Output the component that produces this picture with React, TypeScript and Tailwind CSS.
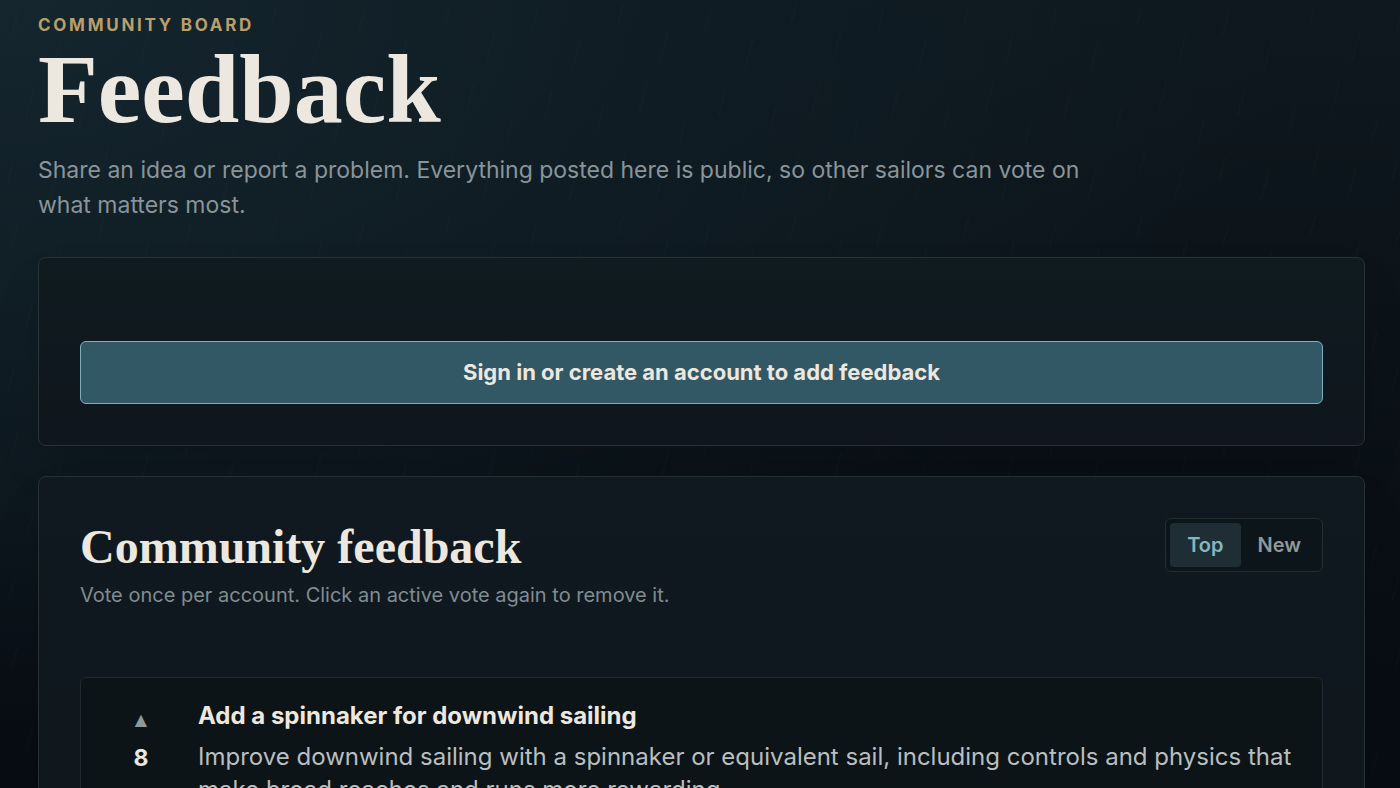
import React, { useState } from 'react';

type SortMode = 'top' | 'new';

interface FeedbackItem {
  id: number;
  title: string;
  body: string;
  votes: number;
}

const items: FeedbackItem[] = [
  {
    id: 1,
    title: 'Add a spinnaker for downwind sailing',
    body: 'Improve downwind sailing with a spinnaker or equivalent sail, including controls and physics that make broad reaches and runs more rewarding.',
    votes: 8,
  },
];

const sortOptions: { value: SortMode; label: string }[] = [
  { value: 'top', label: 'Top' },
  { value: 'new', label: 'New' },
];

// Faint slanted rain behind the whole page
const Rain: React.FC = () => (
  <svg className="pointer-events-none absolute inset-0 h-full w-full" aria-hidden="true">
    <defs>
      <pattern id="rain" width="173" height="211" patternUnits="userSpaceOnUse">
        <g stroke="#8fb9ad" strokeWidth="1" strokeLinecap="round" opacity="0.025">
          <path d="M18 12l-6 22M61 40l-8 29M104 6l-5 18M149 31l-8 30M33 92l-7 25M84 108l-6 22M128 84l-8 29M166 122l-5 19M14 158l-6 22M58 171l-8 29M108 150l-6 22M145 168l-8 30" />
        </g>
      </pattern>
    </defs>
    <rect width="100%" height="100%" fill="url(#rain)" />
  </svg>
);

const FeedbackCard: React.FC<{ item: FeedbackItem }> = ({ item }) => (
  <article className="flex gap-[17px] rounded-md border border-[#20292d] bg-[#0c1418] p-5">
    <div className="flex w-20 shrink-0 flex-col items-center">
      <button
        type="button"
        aria-label={`Upvote ${item.title}`}
        className="h-11 w-11 font-['DejaVu_Sans'] text-base text-[#8f999b]"
      >
        ▲
      </button>
      <span className="text-[23px] leading-[33px] font-bold text-[#ece8df]">{item.votes}</span>
    </div>
    <div className="min-w-0 flex-1">
      <h3 className="text-2xl leading-9 font-bold text-[#ece8df]">{item.title}</h3>
      <p className="mt-1.5 text-2xl leading-[33px] text-[#b9bfc0]">{item.body}</p>
    </div>
  </article>
);

const App: React.FC = () => {
  const [sort, setSort] = useState<SortMode>('top');

  return (
    <div className="relative h-screen overflow-hidden bg-[#080d14] bg-[radial-gradient(ellipse_at_0%_0%,#15262e_0%,#101d25_30%,transparent_65%),linear-gradient(180deg,#0e181e_0%,#0c141a_35%,#090f15_65%,#080c13_100%)] font-['Inter',sans-serif]">
      <Rain />
      <main className="relative pt-3 pr-[35px] pl-[38px]">
        <header>
          <p className="text-[17px] leading-[26px] font-bold tracking-[0.16em] text-[#b99f6b] uppercase">
            Community board
          </p>
          <h1 className="mt-[3px] font-['Liberation_Serif',serif] text-[98px] leading-[96px] font-bold text-[#ece8df]">
            Feedback
          </h1>
          <p className="mt-4 max-w-[1100px] text-[23px] leading-[35px] text-[#89959a]">
            Share an idea or report a problem. Everything posted here is public, so other sailors can vote on
            what matters most.
          </p>
        </header>

        <section className="mt-[34px] rounded-lg border border-[#263236] bg-linear-to-b from-[#0f1b20] to-[#0f161d] px-[41px] pt-[83px] pb-[41px] shadow-2xl shadow-black/20">
          <button
            type="button"
            className="h-[63px] w-full rounded-md border border-[#7fb0b9] bg-[#325765] text-[22px] font-bold text-[#ece8df]"
          >
            Sign in or create an account to add feedback
          </button>
        </section>

        <section className="mt-[30px] rounded-lg border border-[#263236] bg-linear-to-b from-[#0f191f] to-[#10171d] p-[41px] shadow-2xl shadow-black/20">
          <div className="flex items-start justify-between">
            <div>
              <h2 className="font-['Liberation_Serif',serif] text-[48px] leading-[58px] font-bold text-[#ece8df]">
                Community feedback
              </h2>
              <p className="mt-1 text-xl leading-[30px] text-[#818c91]">
                Vote once per account. Click an active vote again to remove it.
              </p>
            </div>
            <div className="flex rounded-md border border-[#232e32] bg-[#0c1519] p-1">
              {sortOptions.map((option) => (
                <button
                  key={option.value}
                  type="button"
                  aria-pressed={sort === option.value}
                  onClick={() => setSort(option.value)}
                  className={`h-11 rounded-sm px-[17px] text-xl font-semibold ${
                    sort === option.value ? 'bg-[#1f2e35] text-[#83b8c2]' : 'text-[#8f999b]'
                  }`}
                >
                  {option.label}
                </button>
              ))}
            </div>
          </div>

          <div className="mt-[67px]">
            {items.map((item) => (
              <FeedbackCard key={item.id} item={item} />
            ))}
          </div>
        </section>
      </main>
    </div>
  );
};

export default App;
